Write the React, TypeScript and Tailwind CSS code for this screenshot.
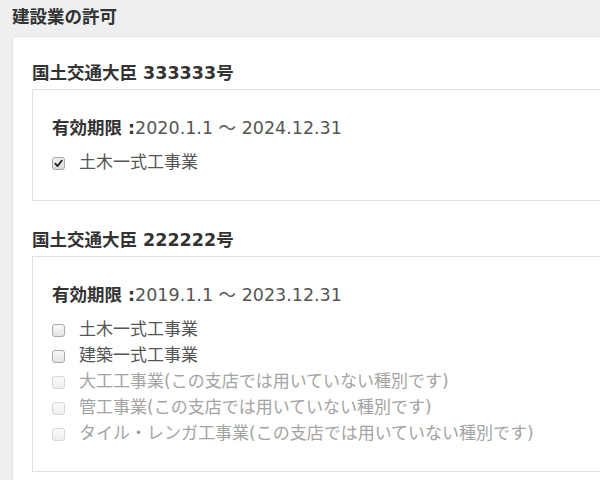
import React from "react";

type Item = { label: string; checked?: boolean; disabled?: boolean };
type Permit = { name: string; period: string; items: Item[] };

const permits: Permit[] = [
  {
    name: "国土交通大臣 333333号",
    period: "2020.1.1 〜 2024.12.31",
    items: [{ label: "土木一式工事業", checked: true }],
  },
  {
    name: "国土交通大臣 222222号",
    period: "2019.1.1 〜 2023.12.31",
    items: [
      { label: "土木一式工事業" },
      { label: "建築一式工事業" },
      { label: "大工工事業(この支店では用いていない種別です)", disabled: true },
      { label: "管工事業(この支店では用いていない種別です)", disabled: true },
      { label: "タイル・レンガ工事業(この支店では用いていない種別です)", disabled: true },
    ],
  },
];

function Box({ item }: { item: Item }) {
  if (item.checked) {
    return (
      <span className="flex w-[13px] h-[13px] shrink-0 items-center justify-center rounded-[3px] border border-[#a8a8a8] bg-gradient-to-b from-[#f0f0f0] to-[#d9d9d9]">
        <svg width="9" height="9" viewBox="0 0 10 10">
          <path d="M1.5 5.2 L4 7.8 L8.6 1.8" fill="none" stroke="#222" strokeWidth="2" strokeLinecap="round" strokeLinejoin="round" />
        </svg>
      </span>
    );
  }
  if (item.disabled) {
    return <span className="block w-[13px] h-[13px] shrink-0 rounded-[3px] border border-[#d6d6d6] bg-gradient-to-b from-[#fafafa] to-[#eeeeee]" />;
  }
  return <span className="block w-[13px] h-[13px] shrink-0 rounded-[3px] border border-[#a9a9a9] bg-gradient-to-b from-[#fafafa] to-[#e3e3e3]" />;
}

export default function App() {
  return (
    <div className="w-[600px] h-[480px] overflow-hidden bg-[#eeeff1] pl-[12px] text-[17.5px] font-['DejaVu_Sans','Noto_Sans_CJK_JP',sans-serif]">
      <h1 className="font-bold text-[#333] leading-[34px] mb-[2px]">建設業の許可</h1>
      <div className="w-[700px] rounded-[4px] border border-[#e3e4e6] bg-white px-[19px] pt-6 pb-8">
        {permits.map((p, i) => (
          <div key={p.name} className={i > 0 ? "mt-[27px]" : ""}>
            <h2 className="font-bold text-[#333] leading-6 mb-1">{p.name}</h2>
            <div className="border border-[#e0e0e0] pl-[19px] pt-[26px] pb-[24px]">
              <p className="leading-6 text-[#555]">
                <span className="font-bold text-[#333]">有効期限 :</span>
                {p.period}
              </p>
              <ul className="mt-[10px] text-[17px]">
                {p.items.map((it) => (
                  <li key={it.label} className="flex h-[26px] items-center gap-[14px]">
                    <Box item={it} />
                    <span className={it.disabled ? "text-[#a3a3a3]" : "text-[#555]"}>{it.label}</span>
                  </li>
                ))}
              </ul>
            </div>
          </div>
        ))}
      </div>
    </div>
  );
}
